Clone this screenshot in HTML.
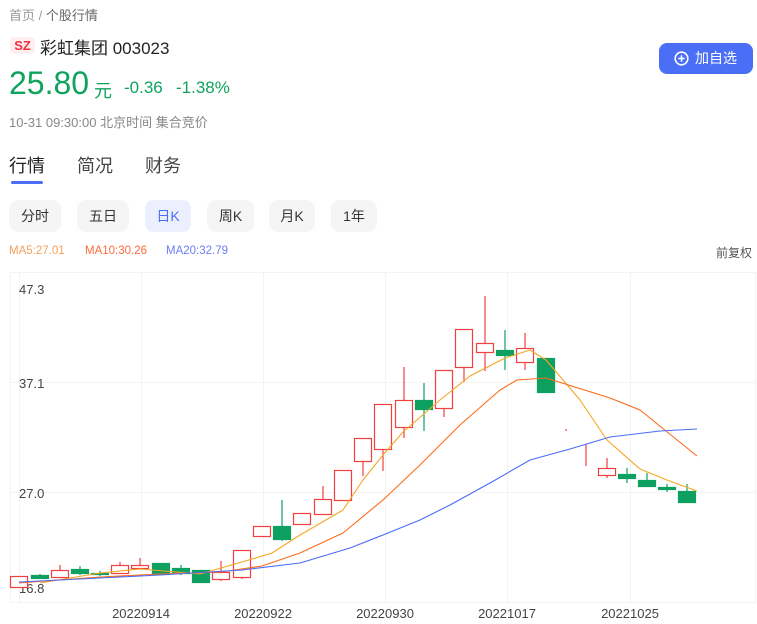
<!DOCTYPE html>
<html><head><meta charset="utf-8"><style>
*{margin:0;padding:0;box-sizing:border-box}
body{width:757px;height:624px;background:#fff;font-family:"Liberation Sans","Noto Sans CJK SC",sans-serif;position:relative;overflow:hidden;color:#333}
.a{position:absolute;white-space:nowrap}
.btn{position:absolute;top:200px;height:32px;border-radius:9px;background:#f5f5f5;font-size:14px;color:#333;text-align:center;line-height:32px}
</style></head><body>
<div class="a" style="left:9px;top:5px;font-size:13px;color:#999">首页 / <span style="color:#666">个股行情</span></div>
<div class="a" style="left:10px;top:37px;width:25px;height:17px;background:#fdeff0;border-radius:4px;color:#f0303a;font-size:13px;font-weight:bold;text-align:center;line-height:17px">SZ</div>
<div class="a" style="left:40px;top:34px;font-size:17px;color:#222">彩虹集团 003023</div>
<div class="a" style="left:9px;top:65px;font-size:32px;color:#0fa35e">25.80</div>
<div class="a" style="left:94px;top:77px;font-size:18px;color:#0fa35e">元</div>
<div class="a" style="left:124px;top:78px;font-size:17px;color:#0fa35e">-0.36</div>
<div class="a" style="left:176px;top:78px;font-size:17px;color:#0fa35e">-1.38%</div>
<div class="a" style="left:9px;top:112px;font-size:13px;color:#888">10-31 09:30:00 北京时间 集合竞价</div>
<div class="a" style="left:659px;top:43px;width:94px;height:31px;background:#4a6ef5;border-radius:8px;color:#fff;font-size:14px;line-height:31px">
<svg style="position:absolute;left:15px;top:8px" width="15" height="15" viewBox="0 0 15 15"><circle cx="7.5" cy="7.5" r="6.3" fill="none" stroke="#fff" stroke-width="1.6"/><path d="M7.5 4.3v6.4M4.3 7.5h6.4" stroke="#fff" stroke-width="1.6"/></svg>
<span style="position:absolute;left:36px">加自选</span></div>
<div class="a" style="left:9px;top:152px;font-size:18px;color:#222">行情</div>
<div class="a" style="left:11px;top:181px;width:32px;height:3px;background:#4a6ef5;border-radius:2px"></div>
<div class="a" style="left:77px;top:152px;font-size:18px;color:#444">简况</div>
<div class="a" style="left:145px;top:152px;font-size:18px;color:#444">财务</div>
<div class="btn" style="left:9px;width:52px">分时</div>
<div class="btn" style="left:77px;width:52px">五日</div>
<div class="btn" style="left:145px;width:46px;background:#ebeffe;color:#4a6ef5">日K</div>
<div class="btn" style="left:207px;width:47px">周K</div>
<div class="btn" style="left:269px;width:46px">月K</div>
<div class="btn" style="left:331px;width:46px">1年</div>
<div class="a" style="left:9px;top:245px;font-size:11.5px;color:#f5a05a">MA5:27.01</div>
<div class="a" style="left:85px;top:245px;font-size:11.5px;color:#ff6a3a">MA10:30.26</div>
<div class="a" style="left:166px;top:245px;font-size:11.5px;color:#6a7ef5">MA20:32.79</div>
<div class="a" style="left:716px;top:244px;font-size:12px;color:#555">前复权</div>
<svg class="a" style="left:0;top:0" width="757" height="624" viewBox="0 0 757 624">
<g stroke="#f3f3f3" stroke-width="1" fill="none">
<rect x="10.5" y="272.5" width="745" height="330"/>
<path d="M19.5 272v330M141.5 272v330M263.5 272v330M385.5 272v330M507.5 272v330M630.5 272v330M10 382.5h746M10 492.5h746"/>
</g>
<g font-size="13" fill="#444" font-family="Liberation Sans,sans-serif">
<text x="19" y="294">47.3</text><text x="19" y="388">37.1</text><text x="19" y="498">27.0</text><text x="19" y="593">16.8</text>
<text x="141" y="618" text-anchor="middle">20220914</text><text x="263" y="618" text-anchor="middle">20220922</text><text x="385" y="618" text-anchor="middle">20220930</text><text x="507" y="618" text-anchor="middle">20221017</text><text x="630" y="618" text-anchor="middle">20221025</text>
</g>
<g stroke-width="1.2">
<g stroke="#f04040" fill="#fff">
<rect x="10.5" y="576.5" width="17" height="11"/>
<path d="M60 565v5M120 562v3M140 558v11M221 561v20M242 577v2M323 486v28M363 461v15M383 449v22M404 367v71M444 408v9M464 367v15M485 296v75M525 333v37M566 429v2M586 444v22M607 458v20"/>
<rect x="51.5" y="570.5" width="17" height="7"/><rect x="111.5" y="565.5" width="17" height="8"/><rect x="131.5" y="565.5" width="17" height="3"/>
<rect x="212.5" y="572.5" width="17" height="7"/><rect x="233.5" y="550.5" width="17" height="27"/><rect x="253.5" y="526.5" width="17" height="10"/>
<rect x="293.5" y="513.5" width="17" height="11"/><rect x="314.5" y="499.5" width="17" height="15"/><rect x="334.5" y="470.5" width="17" height="30"/>
<rect x="354.5" y="438.5" width="17" height="23"/><rect x="374.5" y="404.5" width="17" height="45"/><rect x="395.5" y="400.5" width="17" height="27"/>
<rect x="435.5" y="370.5" width="17" height="38"/><rect x="455.5" y="329.5" width="17" height="38"/><rect x="476.5" y="343.5" width="17" height="9"/>
<rect x="516.5" y="348.5" width="17" height="14"/><rect x="598.5" y="468.5" width="17" height="7"/>
</g>
<g stroke="#0ea060" fill="#0ea060">
<path d="M40 574v5M80 566v9M100 571v5M181 565v10M282 500v41M424 383v48M505 330v40M627 468v15M647 473v14M667 484v8M687 484v7"/>
<rect x="31.5" y="575.5" width="17" height="3"/><rect x="71.5" y="569.5" width="17" height="4"/><rect x="91.5" y="573.5" width="17" height="1"/>
<rect x="152.5" y="563.5" width="17" height="11"/><rect x="172.5" y="568.5" width="17" height="5"/><rect x="192.5" y="570.5" width="17" height="12"/>
<rect x="273.5" y="526.5" width="17" height="13"/><rect x="415.5" y="400.5" width="17" height="9"/><rect x="496.5" y="350.5" width="17" height="5"/>
<rect x="537.5" y="358.5" width="17" height="34"/><rect x="618.5" y="474.5" width="17" height="4"/><rect x="638.5" y="480.5" width="17" height="6"/>
<rect x="658.5" y="487.5" width="17" height="2"/><rect x="678.5" y="491.5" width="17" height="11"/>
</g>
</g>
<g fill="none" stroke-width="1.1" stroke-linejoin="round">
<polyline stroke="#f5a623" points="40,583 100,573 140,569 200,574 242,562 272,553 300,535 343,510 363,480 383,455 403,432 440,400 470,376 505,358 530,350 546,360 580,400 607,440 640,469 667,480 697,491"/>
<polyline stroke="#ff6a1a" points="19,583 100,577 160,574 221,572 262,566 300,553 343,533 383,500 420,465 460,425 500,390 517,380 546,378 610,398 640,410 697,456"/>
<polyline stroke="#4a6cf7" points="19,582 100,578 160,575 242,570 300,563 350,548 383,535 420,520 450,505 490,483 530,460 570,449 610,437 660,431 697,429"/>
</g>
</svg>
</body></html>
